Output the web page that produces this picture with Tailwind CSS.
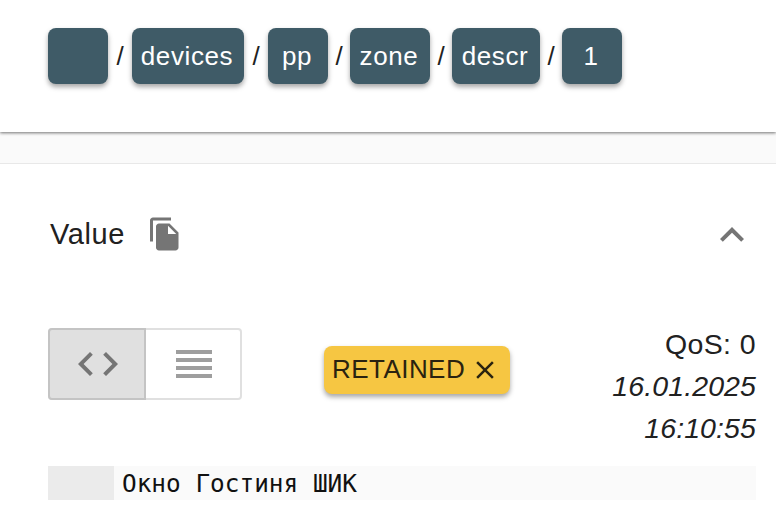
<!DOCTYPE html>
<html lang="en">
<head>
  <meta charset="UTF-8" />
  <title>Topic</title>
  <script src="https://cdn.jsdelivr.net/npm/@tailwindcss/browser@4"></script>
</head>
<body class="h-[516px] w-[776px] overflow-hidden bg-white font-['Liberation_Sans',sans-serif] text-[#212121]">
  <!-- Breadcrumb -->
  <header class="relative z-10 flex h-[132px] items-start bg-white pt-7 pl-12 shadow-[0_1px_3px_rgba(0,0,0,0.55)]">
    <div class="flex items-center text-[26px]">
      <span class="h-14 w-[60px] rounded-lg bg-[#3f5b67] shadow-[0_3px_5px_rgba(0,0,0,0.35)]"></span>
      <span class="w-6 text-center">/</span>
      <span class="flex h-14 w-28 items-center justify-center rounded-lg bg-[#3f5b67] pr-[2px] tracking-[0.6px] text-white shadow-[0_3px_5px_rgba(0,0,0,0.35)]">devices</span>
      <span class="w-6 text-center">/</span>
      <span class="flex h-14 w-[60px] items-center justify-center rounded-lg bg-[#3f5b67] pr-[2px] tracking-[0.6px] text-white shadow-[0_3px_5px_rgba(0,0,0,0.35)]">pp</span>
      <span class="w-[22px] text-center">/</span>
      <span class="flex h-14 w-20 items-center justify-center rounded-lg bg-[#3f5b67] pr-[2px] tracking-[0.6px] text-white shadow-[0_3px_5px_rgba(0,0,0,0.35)]">zone</span>
      <span class="w-[22px] text-center">/</span>
      <span class="flex h-14 w-[88px] items-center justify-center rounded-lg bg-[#3f5b67] pr-[2px] tracking-[0.6px] text-white shadow-[0_3px_5px_rgba(0,0,0,0.35)]">descr</span>
      <span class="w-[22px] text-center">/</span>
      <span class="flex h-14 w-[60px] items-center justify-center rounded-lg bg-[#3f5b67] pr-[2px] tracking-[0.6px] text-white shadow-[0_3px_5px_rgba(0,0,0,0.35)]">1</span>
    </div>
  </header>

  <div class="h-[32px] border-b border-[#e8e8e8] bg-[#fafafa]"></div>

  <!-- Value panel -->
  <section class="px-5">
    <div class="flex h-[140px] items-start justify-between pt-[52px] pl-[30px]">
      <div class="flex items-center">
        <span class="text-[29px] leading-9 tracking-[0.6px]">Value</span>
        <svg class="ml-[22px] h-9 w-9" viewBox="0 0 24 24" fill="#757575"><path d="M16 1H4c-1.1 0-2 .9-2 2v14h2V3h12V1zm-1 4 6 6v10c0 1.1-.9 2-2 2H7.99C6.89 23 6 22.1 6 21l.01-14c0-1.1.89-2 1.99-2h7zm-1 7h5.5L14 6.5V12z"/></svg>
      </div>
      <svg class="-mt-[5px] h-12 w-12" viewBox="0 0 24 24" fill="#757575"><path d="M12 8l-6 6 1.41 1.41L12 10.83l4.59 4.58L18 14z"/></svg>
    </div>

    <div class="flex items-start justify-between pl-7">
      <div class="mt-[24px] flex h-[72px] w-[194px] rounded border-2 border-[#e0e0e0]">
        <div class="-my-[2px] -ml-[2px] flex w-[98px] items-center justify-center rounded-l border-2 border-[#c4c4c4] bg-[#e0e0e0] pl-[2px]">
          <svg class="h-12 w-12" viewBox="0 0 24 24" fill="#757575"><path d="M9.4 16.6 4.8 12l4.6-4.6L8 6l-6 6 6 6 1.4-1.4zm5.2 0 4.6-4.6-4.6-4.6L16 6l6 6-6 6-1.4-1.4z"/></svg>
        </div>
        <div class="flex flex-1 items-center justify-center pl-[2px]">
          <svg class="h-12 w-12" viewBox="0 0 24 24" fill="#9e9e9e"><path d="M3 15h18v-2H3v2zm0 4h18v-2H3v2zm0-8h18V9H3v2zm0-6v2h18V5H3z"/></svg>
        </div>
      </div>

      <div class="mt-[42px] ml-[82px] flex h-12 w-[186px] items-center rounded-lg bg-[#f6c642] pb-[2px] pl-2 text-[26px] tracking-[0.45px] text-[#2a2310] shadow-[0_3px_5px_rgba(0,0,0,0.35)]">
        RETAINED
        <svg class="mt-[2px] ml-[5px] h-[30px] w-[30px]" viewBox="0 0 24 24" fill="#2a2310"><path d="M19 6.41 17.59 5 12 10.59 6.41 5 5 6.41 10.59 12 5 17.59 6.41 19 12 13.41 17.59 19 19 17.59 13.41 12z"/></svg>
      </div>

      <div class="mt-[19px] ml-auto text-right text-[28.5px] leading-[42px] tracking-[0.1px]">
        <div class="tracking-[0.4px]">QoS: 0</div>
        <div class="italic">16.01.2025</div>
        <div class="italic">16:10:55</div>
      </div>
    </div>

    <!-- Payload -->
    <div class="mt-[17px] ml-7 flex h-[34px] bg-[#fafafa] font-['DejaVu_Sans_Mono',monospace] text-[24.4px] leading-[36px]">
      <span class="w-[66px] bg-[#ebebeb]"></span>
      <span class="pl-[8px] text-[#111]">Окно Гостиня ШИК</span>
    </div>
  </section>
</body>
</html>
